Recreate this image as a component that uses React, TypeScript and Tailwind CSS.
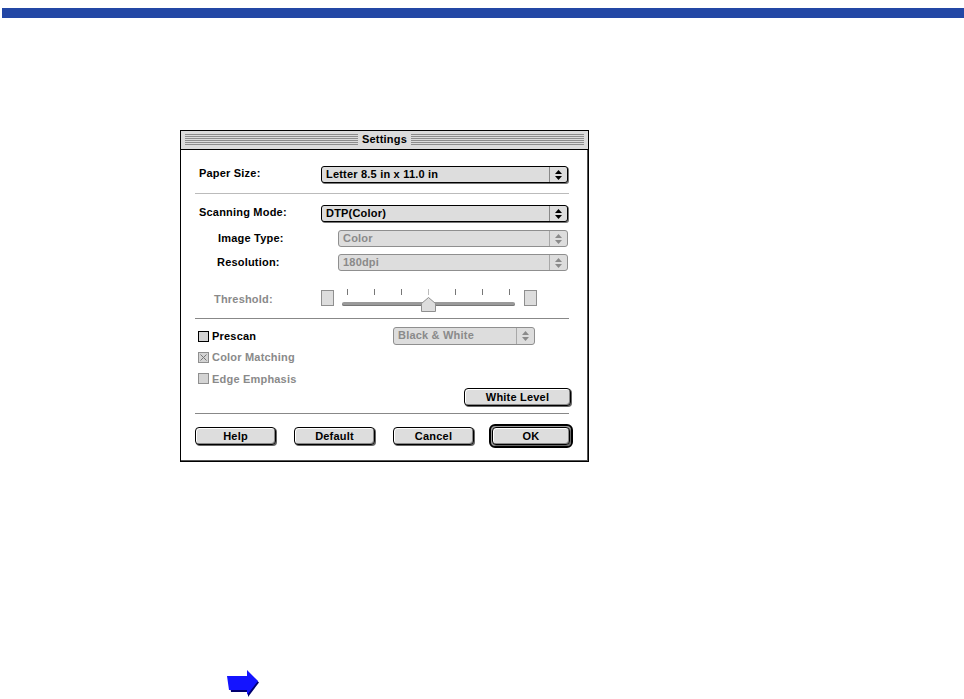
import type { ReactNode } from "react";

const font = "font-['Liberation_Sans',Arial,sans-serif] font-bold text-[11px] tracking-[0.2px]";

function Updown({ disabled = false }: { disabled?: boolean }) {
  const fill = disabled ? "#8a8a8a" : "#000000";
  return (
    <svg width="7" height="10" viewBox="0 0 7 10">
      <path d="M3.5 0 L7 4 H0 Z" fill={fill} />
      <path d="M3.5 10 L0 6 H7 Z" fill={fill} />
    </svg>
  );
}

function PopUp({ label, className, disabled = false }: { label: string; className: string; disabled?: boolean }) {
  return (
    <div
      className={`flex h-[17px] items-stretch rounded-[3px] border bg-[#dddddd] ${
        disabled ? "border-[#8f8f8f] text-[#8a8a8a]" : "border-black text-black shadow-[1px_1px_0_#777777]"
      } ${className}`}
    >
      <span className="flex-1 truncate pl-1 leading-[14px]">{label}</span>
      <span className={`flex w-[18px] items-center justify-center border-l ${disabled ? "border-[#a8a8a8]" : "border-[#888888]"}`}>
        <Updown disabled={disabled} />
      </span>
    </div>
  );
}

function Button({ children, className }: { children: ReactNode; className: string }) {
  return (
    <div
      className={`flex h-[18px] items-center justify-center rounded-[4px] border border-black bg-[#dddddd] text-black shadow-[inset_1px_1px_0_#ffffff,inset_-1px_-1px_0_#888888,1px_1px_0_#666666] ${className}`}
    >
      {children}
    </div>
  );
}

function Separator({ className }: { className: string }) {
  return <div className={`ml-[14px] h-px w-[374px] ${className}`} />;
}

function Checkbox({ label, checked = false, disabled = false }: { label: string; checked?: boolean; disabled?: boolean }) {
  return (
    <div className={`flex items-center gap-[3px] ${disabled ? "text-[#8a8a8a]" : "text-black"}`}>
      <span
        className={`flex h-[11px] w-[11px] items-center justify-center border bg-[#d4d4d4] ${
          disabled ? "border-[#8f8f8f]" : "border-black"
        }`}
      >
        {checked && (
          <svg width="7" height="7" viewBox="0 0 7 7">
            <path d="M0.5 0.5 L6.5 6.5 M6.5 0.5 L0.5 6.5" stroke="#777777" strokeWidth="1" />
          </svg>
        )}
      </span>
      <span>{label}</span>
    </div>
  );
}

function TitleLines({ className }: { className: string }) {
  return (
    <div className={`flex h-[11px] flex-col justify-between ${className}`}>
      {[0, 1, 2, 3, 4, 5].map((i) => (
        <div key={i} className="h-px bg-[#8c8c8c]" />
      ))}
    </div>
  );
}

export default function App() {
  const ticks = [0, 1, 2, 3, 4, 5, 6];
  return (
    <div className={`h-[699px] w-[964px] overflow-hidden bg-white ${font}`}>
      <div className="ml-[2px] mt-[8px] h-[10px] bg-[#2347a5]" />

      {/* Settings dialog */}
      <div className="ml-[180px] mt-[112px] h-[332px] w-[409px] border border-black bg-white shadow-[inset_-1px_-1px_0_#555555]">
        <div className="flex h-[19px] items-center gap-[4px] border-b border-black bg-[#dcdcdc] px-[4px] pb-px">
          <TitleLines className="flex-1" />
          <span className="text-black">Settings</span>
          <TitleLines className="flex-1" />
        </div>

        <div className="mt-[16px] flex h-[17px] items-center pl-[18px]">
          <span className="w-[122px] pb-[2px] text-black">Paper Size:</span>
          <PopUp label="Letter 8.5 in x 11.0 in" className="w-[247px]" />
        </div>
        <Separator className="mt-[10px] bg-[#bbbbbb]" />

        <div className="mt-[11px] flex h-[17px] items-center pl-[18px]">
          <span className="w-[122px] pb-[2px] text-black">Scanning Mode:</span>
          <PopUp label="DTP(Color)" className="w-[247px]" />
        </div>
        <div className="mt-[8px] flex h-[17px] items-center pl-[37px]">
          <span className="w-[120px] pb-[1px] text-black">Image Type:</span>
          <PopUp label="Color" disabled className="w-[230px]" />
        </div>
        <div className="mt-[7px] flex h-[17px] items-center pl-[36px]">
          <span className="w-[121px] pb-[1px] text-black">Resolution:</span>
          <PopUp label="180dpi" disabled className="w-[230px]" />
        </div>

        {/* Threshold slider */}
        <div className="mt-[18px] flex h-[22px] items-start pl-[33px]">
          <span className="mt-[2px] w-[107px] text-[#8a8a8a]">Threshold:</span>
          <div className="mt-[1px] h-[16px] w-[13px] border border-[#8f8f8f] bg-[#dddddd]" />
          <div className="relative ml-[8px] h-[22px] w-[173px]">
            <div className="flex justify-between px-[5px]">
              {ticks.map((t) => (
                <div key={t} className={`h-[6px] w-px ${t === 3 ? "bg-[#bbbbbb]" : "bg-[#777777]"}`} />
              ))}
            </div>
            <div className="mt-[7px] h-[4px] rounded-[2px] bg-[#9a9a9a] shadow-[inset_0_-1px_0_#777777]" />
            <svg className="absolute left-[79px] top-[8px]" width="15" height="15" viewBox="0 0 15 15">
              <path d="M0.5 14.5 V6.5 L7.5 0.5 L14.5 6.5 V14.5 Z" fill="#dddddd" stroke="#8f8f8f" />
            </svg>
          </div>
          <div className="ml-[9px] mt-[1px] h-[16px] w-[13px] border border-[#8f8f8f] bg-[#dddddd]" />
        </div>
        <Separator className="mt-[7px] bg-[#888888]" />

        <div className="mt-[8px] flex h-[18px] items-center pl-[17px]">
          <div className="w-[195px]">
            <Checkbox label="Prescan" />
          </div>
          <PopUp label="Black & White" disabled className="h-[18px] w-[142px]" />
        </div>
        <div className="ml-[17px] mt-[4px]">
          <Checkbox label="Color Matching" checked disabled />
        </div>
        <div className="ml-[17px] mt-[5px]">
          <Checkbox label="Edge Emphasis" disabled />
        </div>
        <div className="mt-[1px] flex justify-end pr-[17px]">
          <Button className="w-[107px]">White Level</Button>
        </div>
        <Separator className="mt-[7px] bg-[#888888]" />

        <div className="mt-[10px] flex items-center pl-[14px]">
          <Button className="w-[81px]">Help</Button>
          <Button className="ml-[18px] w-[81px]">Default</Button>
          <Button className="ml-[18px] w-[81px]">Cancel</Button>
          <div className="ml-[15px] rounded-[6px] border-2 border-black bg-[#999999] p-px">
            <Button className="w-[78px]">OK</Button>
          </div>
        </div>
      </div>

      {/* Next page arrow */}
      <svg className="ml-[226px] mt-[208px]" width="35" height="29" viewBox="0 0 35 29">
        <path d="M3 8 H22 V2 L33 12.5 L22 27 V22 H5 Z" fill="#000070" />
        <path d="M1 6 H21 V0 L32 11 L21 25 V20 H3 Z" fill="#1414ff" />
      </svg>
    </div>
  );
}
